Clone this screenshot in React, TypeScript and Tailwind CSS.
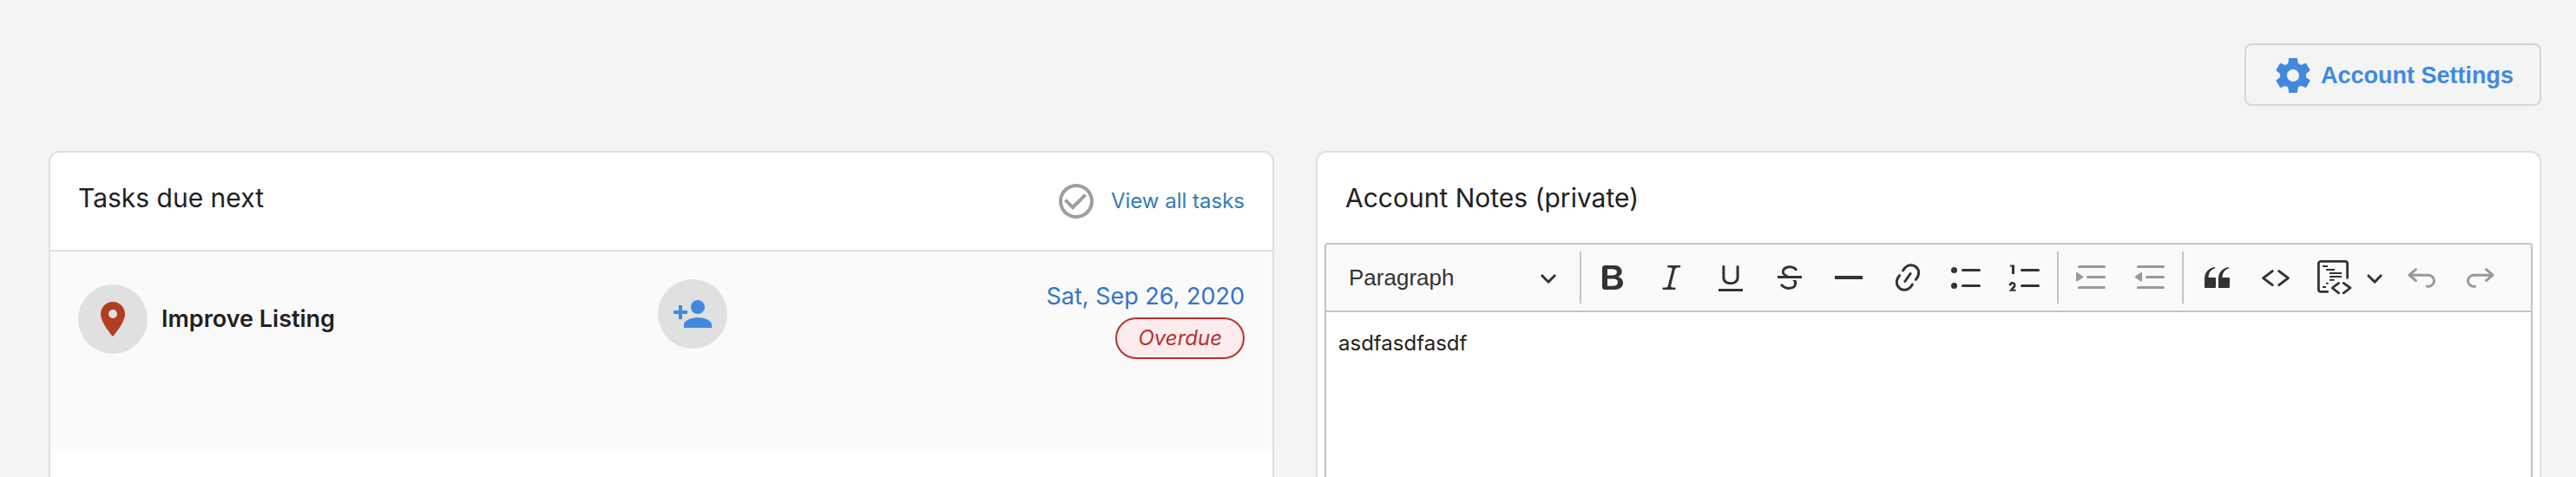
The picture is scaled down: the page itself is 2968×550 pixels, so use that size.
import type { ReactNode } from "react"
import { clsx } from "clsx"
import { MdCheckCircleOutline, MdPersonAdd, MdPlace } from "react-icons/md"

const listLine = (y: number) => `M7.75 ${y}h9.5`

function Icon({ children }: { children: ReactNode }) {
  return (
    <svg viewBox="0 0 20 20" className="h-10 w-10 overflow-visible" fill="currentColor" aria-hidden="true">
      {children}
    </svg>
  )
}

function Chevron({ className }: { className?: string }) {
  return (
    <svg viewBox="0 0 10 10" className={clsx("h-5 w-5", className)} fill="currentColor" aria-hidden="true">
      <path d="M.941 4.523a.75.75 0 1 1 1.06-1.06l3.006 3.005 3.005-3.005a.75.75 0 1 1 1.06 1.06l-3.549 3.55a.75.75 0 0 1-1.168-.136L.941 4.523z" />
    </svg>
  )
}

function GearIcon() {
  return (
    <svg viewBox="0 0 24 24" className="h-12 w-12" fill="currentColor" aria-hidden="true">
      <path d="M19.44 12.99l-.01.02c.04-.33.08-.67.08-1.01 0-.34-.03-.66-.07-.99l.01.02 2.44-1.92-2.43-4.22-2.87 1.16.01.01c-.52-.4-1.09-.74-1.71-1h.01L14.44 2H9.57l-.44 3.07h.01c-.62.26-1.19.6-1.71 1l.01-.01-2.88-1.17-2.44 4.22 2.44 1.92.01-.02c-.04.33-.07.65-.07.99 0 .34.03.68.08 1.01l-.01-.02-2.1 1.65-.33.26 2.43 4.2 2.88-1.15-.02-.04c.53.41 1.1.75 1.73 1.01h-.03L9.58 22h4.85s.03-.18.06-.42l.38-2.65h-.01c.62-.26 1.2-.6 1.73-1.01l-.02.04 2.88 1.15 2.43-4.2s-.14-.12-.33-.26l-2.11-1.66zM12 15.5c-1.93 0-3.5-1.57-3.5-3.5s1.57-3.5 3.5-3.5 3.5 1.57 3.5 3.5-1.57 3.5-3.5 3.5z" />
    </svg>
  )
}

const formatTools = [
  {
    label: "Bold",
    icon: (
      <path d="M10.187 17H5.773c-.637 0-1.092-.138-1.364-.415-.273-.277-.409-.718-.409-1.323V4.738c0-.617.14-1.062.419-1.332.279-.27.73-.406 1.354-.406h4.68c.69 0 1.288.041 1.793.124.506.083.96.242 1.36.478.341.197.644.447.906.75a3.262 3.262 0 0 1 .808 2.162c0 1.401-.722 2.426-2.167 3.075C15.05 10.175 16 11.315 16 13.01a3.756 3.756 0 0 1-2.296 3.504 6.1 6.1 0 0 1-1.517.377c-.571.073-1.238.11-2 .11zm-.217-6.217H7v4.087h3.069c1.977 0 2.965-.69 2.965-2.072 0-.707-.256-1.22-.768-1.537-.512-.319-1.277-.478-2.296-.478zM7 5.13v3.619h2.606c.729 0 1.292-.067 1.69-.2a1.6 1.6 0 0 0 .91-.765c.165-.267.247-.566.247-.897 0-.707-.26-1.176-.778-1.409-.519-.232-1.31-.348-2.375-.348H7z" />
    ),
  },
  {
    label: "Italic",
    icon: (
      <path d="m9.586 14.633.021.004c-.036.335.095.655.393.962.082.083.173.15.274.201h1.474a.6.6 0 1 1 0 1.2H5.304a.6.6 0 0 1 0-1.2h1.15c.474-.07.809-.182 1.005-.334.157-.122.291-.32.404-.597l2.416-9.55a1.053 1.053 0 0 0-.281-.823 1.12 1.12 0 0 0-.442-.296H8.15a.6.6 0 0 1 0-1.2h6.443a.6.6 0 1 1 0 1.2h-1.195c-.376.056-.65.155-.823.296-.215.175-.423.439-.623.79l-2.366 9.347z" />
    ),
  },
  {
    label: "Underline",
    icon: (
      <path d="M3 18v-1.5h14V18zm2.2-8V3.6c0-.4.4-.6.8-.6.3 0 .7.2.7.6v6.2c0 2 1.3 2.8 3.2 2.8 1.9 0 3.4-.9 3.4-2.9V3.6c0-.3.4-.5.8-.5.3 0 .7.2.7.5V10c0 2.7-2.2 4-4.9 4-2.6 0-4.7-1.2-4.7-4z" />
    ),
  },
  {
    label: "Strikethrough",
    icon: (
      <path d="M7 16.4c-.8-.4-1.5-.9-2.2-1.5a.6.6 0 0 1-.2-.5l.3-.6h1c1 1.2 2.1 1.7 3.7 1.7 1 0 1.8-.3 2.3-.6.6-.4.6-1.2.6-1.3.2-1.2-.9-2.1-.9-2.1h2.1c.3.7.4 1.2.4 1.7v.8l-.6 1.2c-.6.8-1.1 1-1.6 1.2a6 6 0 0 1-2.4.6c-1 0-1.8-.3-2.5-.6zM6.8 9 6 8.3c-.4-.5-.5-.8-.5-1.6 0-.7.1-1.3.5-1.8.4-.6 1-1 1.6-1.3a6.3 6.3 0 0 1 4.7 0 4 4 0 0 1 1.7 1l.3.7c0 .1.2.4-.2.7-.4.2-.9.1-1 0a3 3 0 0 0-1.2-1c-.4-.2-1-.3-2-.4-.7 0-1.4.2-2 .6-.8.6-1 .8-1 1.5 0 .8.5 1 1.2 1.5.6.4 1.1.7 1.9 1H6.8zM3 10.5V9h14v1.5z" />
    ),
  },
  { label: "Horizontal line", icon: <path d="M2 9h16v2H2z" /> },
  {
    label: "Link",
    icon: (
      <path d="m11.077 15 .991-1.416a.75.75 0 1 1 1.229.86l-1.148 1.64a.748.748 0 0 1-.217.206 5.251 5.251 0 0 1-8.503-5.955.741.741 0 0 1 .12-.274l1.147-1.639a.75.75 0 1 1 1.228.86L4.933 10.7l.006.003a3.75 3.75 0 0 0 6.132 4.294l.006.004zm5.494-5.335a.748.748 0 0 1-.12.274l-1.147 1.639a.75.75 0 1 1-1.228-.86l.86-1.23a3.75 3.75 0 0 0-6.144-4.301l-.86 1.229a.75.75 0 0 1-1.229-.86l1.148-1.64a.748.748 0 0 1 .217-.206 5.251 5.251 0 0 1 8.503 5.955zm-4.563-2.532a.75.75 0 0 1 .184 1.045l-3.155 4.505a.75.75 0 1 1-1.229-.86l3.155-4.506a.75.75 0 0 1 1.045-.184z" />
    ),
  },
  {
    label: "Bulleted list",
    icon: (
      <>
        <path d={listLine(5.75) + listLine(14.75)} stroke="currentColor" strokeWidth="1.5" strokeLinecap="round" />
        <circle cx="2.75" cy="5.75" r="1.75" />
        <circle cx="2.75" cy="14.75" r="1.75" />
      </>
    ),
  },
  {
    label: "Numbered list",
    icon: (
      <>
        <path d={listLine(5.75) + listLine(14.75)} stroke="currentColor" strokeWidth="1.5" strokeLinecap="round" />
        <path d="M3.5 3v5H2V3.7H1v-1h2.5V3zM.343 17.857l2.59-3.257H2.92a.6.6 0 1 0-1.04 0H.302a2 2 0 1 1 3.995 0h-.001c-.048.405-.16.734-.333.988-.175.254-.59.692-1.244 1.312H4.3v1h-4l.043-.043z" />
      </>
    ),
  },
]

const indentTools = [
  {
    label: "Increase indent",
    icon: (
      <>
        <path d="M2.75 3.75h14.5M7.75 9.75h9.5M2.75 15.75h14.5" stroke="currentColor" strokeWidth="1.5" strokeLinecap="round" />
        <path d="M1.632 6.95 5.02 9.358a.4.4 0 0 1-.013.661l-3.39 2.207A.4.4 0 0 1 1 11.892V7.275a.4.4 0 0 1 .632-.326z" />
      </>
    ),
  },
  {
    label: "Decrease indent",
    icon: (
      <>
        <path d="M2.75 3.75h14.5M7.75 9.75h9.5M2.75 15.75h14.5" stroke="currentColor" strokeWidth="1.5" strokeLinecap="round" />
        <path d="M4.368 6.95.98 9.358a.4.4 0 0 0 .013.661l3.39 2.207A.4.4 0 0 0 5 11.892V7.275a.4.4 0 0 0-.632-.326z" />
      </>
    ),
  },
]

const insertTools = [
  {
    label: "Block quote",
    icon: (
      <path d="M3 10.423a6.5 6.5 0 0 1 6.056-6.408l.038.67C6.448 5.423 5.354 7.663 5.22 10H9c.552 0 .5.432.5.986v4.511c0 .554-.448.503-1 .503h-5c-.552 0-.5-.449-.5-1.003v-4.574zm8 0a6.5 6.5 0 0 1 6.056-6.408l.038.67c-2.646.739-3.74 2.979-3.873 5.315H17c.552 0 .5.432.5.986v4.511c0 .554-.448.503-1 .503h-5c-.552 0-.5-.449-.5-1.003v-4.574z" />
    ),
  },
  {
    label: "Code",
    icon: (
      <path
        d="M8.1 6.3 2.8 10.3 8.1 14.3M11.9 6.3l5.3 4-5.3 4"
        fill="none"
        stroke="currentColor"
        strokeWidth="1.5"
        strokeLinecap="round"
        strokeLinejoin="round"
      />
    ),
  },
  {
    label: "Code block",
    icon: (
      <g fill="none" stroke="currentColor">
        <path d="M17.3 10.8V2A1.3 1.3 0 0 0 16 .7H2A1.3 1.3 0 0 0 .7 2v15A1.3 1.3 0 0 0 2 18.2h4.4" strokeWidth="1.4" />
        <path d="M3 3.5h3M5 5.5h5M7 7.5h7M7 9.5h7M7 11.4h2.8M5 13.4h1.3M3 15.5h2" />
        <path d="M12.3 13.2 8.6 16l3.7 2.9M15.1 13.2 19 16l-3.9 2.9" strokeWidth="1.4" strokeLinecap="round" strokeLinejoin="round" />
      </g>
    ),
  },
]

const undoPath =
  "m5.042 9.367 2.189 1.837a.75.75 0 0 1-.965 1.149l-3.788-3.18a.747.747 0 0 1-.21-.284.75.75 0 0 1 .17-.945L6.23 4.762a.75.75 0 1 1 .964 1.15L4.863 7.866h8.917A.75.75 0 0 1 14 7.9a4 4 0 1 1-1.477 7.718l.344-1.489a2.5 2.5 0 1 0 1.094-4.73l.008-.032H5.042z"

const historyTools = [
  { label: "Undo", icon: <path d={undoPath} /> },
  { label: "Redo", icon: <path d={undoPath} transform="matrix(-1 0 0 1 20 0)" /> },
]

function ToolButton({ label, disabled, children }: { label: string; disabled?: boolean; children: ReactNode }) {
  return (
    <button
      type="button"
      aria-label={label}
      disabled={disabled}
      className="flex h-15 w-[68px] items-center justify-center rounded disabled:text-[#999999]"
    >
      <Icon>{children}</Icon>
    </button>
  )
}

function Separator() {
  return <span className="h-15 w-0.5 bg-[#c4c4c4]" />
}

function Toolbar() {
  return (
    <div className="flex h-[78px] items-center border-b-2 border-[#c4c4c4] bg-[#fafafa] text-[#333333]">
      <div className="relative w-[292px]">
        <select
          aria-label="Heading"
          className="h-15 w-full appearance-none pl-[26px] font-['Liberation_Sans',sans-serif] text-[26px] outline-none"
        >
          <option>Paragraph</option>
        </select>
        <Chevron className="pointer-events-none absolute top-5 right-[26px]" />
      </div>
      <Separator />
      <div className="flex px-0.5">
        {formatTools.map((tool) => (
          <ToolButton key={tool.label} label={tool.label}>
            {tool.icon}
          </ToolButton>
        ))}
      </div>
      <Separator />
      <div className="flex pr-0.5 pl-1">
        {indentTools.map((tool) => (
          <ToolButton key={tool.label} label={tool.label} disabled>
            {tool.icon}
          </ToolButton>
        ))}
      </div>
      <Separator />
      <div className="flex pl-1">
        {insertTools.map((tool) => (
          <ToolButton key={tool.label} label={tool.label}>
            {tool.icon}
          </ToolButton>
        ))}
        <button type="button" aria-label="Code block language" className="mr-2 flex w-6 items-center justify-center">
          <Chevron />
        </button>
        {historyTools.map((tool) => (
          <ToolButton key={tool.label} label={tool.label} disabled>
            {tool.icon}
          </ToolButton>
        ))}
      </div>
    </div>
  )
}

function TasksCard() {
  return (
    <section className="rounded-xl border-2 border-[#dfdfdf] bg-white">
      <header className="flex h-[114px] items-start justify-between border-b-2 border-[#dfdfdf] px-8 pt-8">
        <h2 className="text-[30px] leading-10">Tasks due next</h2>
        <div className="flex items-center gap-4">
          <MdCheckCircleOutline className="h-12 w-12 text-[#9e9e9e]" />
          <a href="#tasks" className="text-[24px] leading-12 text-[#337ab7]">
            View all tasks
          </a>
        </div>
      </header>
      <div className="grid h-[228px] grid-cols-2 items-start bg-[#fafafa] pr-8 pl-6">
        <div className="flex items-center gap-4 pt-[38px] pl-2">
          <span className="flex h-20 w-20 items-center justify-center rounded-full bg-[#e0e0e0]">
            <MdPlace className="h-12 w-12 text-[#b03f21]" />
          </span>
          <span className="text-[27px] font-semibold">Improve Listing</span>
        </div>
        <div className="flex items-start justify-between pt-8">
          <button
            type="button"
            aria-label="Assign user"
            className="flex h-20 w-20 items-center justify-center rounded-full bg-[#e0e0e0]"
          >
            <MdPersonAdd className="h-12 w-12 text-[#4189df]" />
          </button>
          <div className="flex flex-col items-end gap-1">
            <span className="text-[27px] leading-10 text-[#3273cb]">Sat, Sep 26, 2020</span>
            <span className="flex h-12 items-center rounded-full border-2 border-[#b6322d] bg-[#fdecee] px-6 text-[24px] text-[#b6322d] italic">
              Overdue
            </span>
          </div>
        </div>
      </div>
      <div className="h-60" />
    </section>
  )
}

function NotesCard() {
  return (
    <section className="rounded-xl border-2 border-[#dfdfdf] bg-white px-2">
      <h2 className="px-6 py-8 text-[30px] leading-10">Account Notes (private)</h2>
      <div className="overflow-hidden rounded border-2 border-[#c4c4c4]">
        <Toolbar />
        <textarea
          aria-label="Account notes"
          defaultValue="asdfasdfasdf"
          className="block h-96 w-full resize-none px-3.5 py-4 text-[24px] leading-10 outline-none"
        />
      </div>
    </section>
  )
}

export default function App() {
  return (
    <div className="h-screen overflow-hidden bg-[#f4f4f4] pt-[50px] pr-10 pl-14 font-[Inter,sans-serif] text-[#212121]">
      <div className="mb-[52px] flex justify-end">
        <button
          type="button"
          className="flex h-[72px] items-center gap-2 rounded-lg border-2 border-[#d6d6d6] px-[30px] pt-0.5 font-['Liberation_Sans',sans-serif] text-[27px] font-bold text-[#4189df]"
        >
          <GearIcon />
          Account Settings
        </button>
      </div>
      <main className="grid grid-cols-2 items-start gap-12">
        <TasksCard />
        <NotesCard />
      </main>
    </div>
  )
}
